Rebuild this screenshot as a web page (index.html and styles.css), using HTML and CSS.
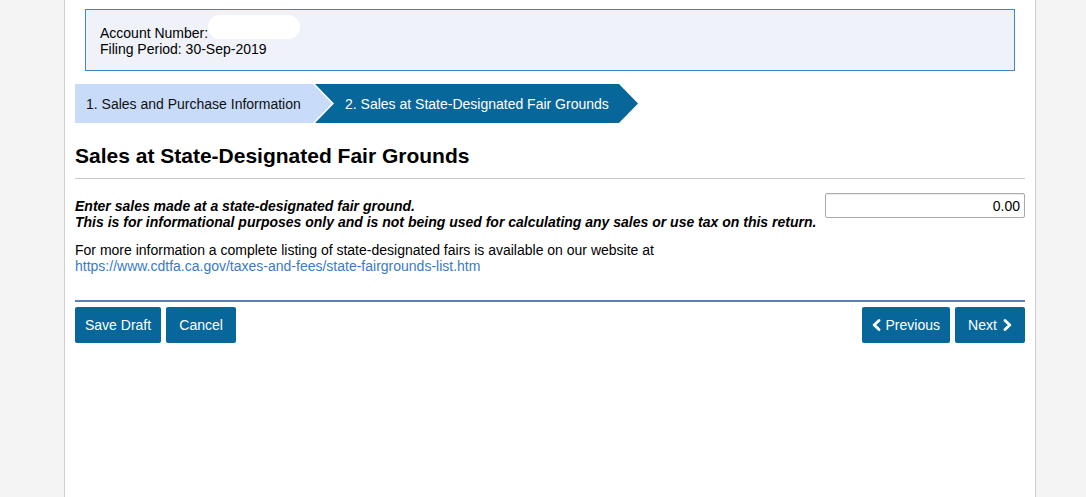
FILE: index.html
```html
<!DOCTYPE html>
<html>
<head>
<meta charset="utf-8">
<link rel="stylesheet" href="styles.css">
</head>
<body>
<div class="page">
  <div class="content">
    <div class="info">
      <div class="info-line">Account Number: <span class="redact"></span></div>
      <div class="info-line">Filing Period: 30-Sep-2019</div>
    </div>
    <div class="steps">
      <div class="step step1">1. Sales and Purchase Information</div>
      <div class="step step2">2. Sales at State-Designated Fair Grounds</div>
    </div>
    <h1 class="title">Sales at State-Designated Fair Grounds</h1>
    <div class="row">
      <div class="prompt">
        <div>Enter sales made at a state-designated fair ground.</div>
        <div>This is for informational purposes only and is not being used for calculating any sales or use tax on this return.</div>
      </div>
      <input class="amount" type="text" value="0.00">
    </div>
    <div class="more">
      <div>For more information a complete listing of state-designated fairs is available on our website at</div>
      <a class="link" href="#">https://www.cdtfa.ca.gov/taxes-and-fees/state-fairgrounds-list.htm</a>
    </div>
    <div class="actions">
      <div class="group">
        <button class="btn">Save Draft</button>
        <button class="btn">Cancel</button>
      </div>
      <div class="group">
        <button class="btn"><svg class="chev prev" viewBox="0 0 9 12" width="9" height="12"><path d="M7 1.5 L2.2 6 L7 10.5" fill="none" stroke="#fff" stroke-width="2.8" stroke-linecap="round" stroke-linejoin="round"/></svg>Previous</button>
        <button class="btn">Next<svg class="chev next" viewBox="0 0 9 12" width="9" height="12"><path d="M2 1.5 L6.8 6 L2 10.5" fill="none" stroke="#fff" stroke-width="2.8" stroke-linecap="round" stroke-linejoin="round"/></svg></button>
      </div>
    </div>
  </div>
</div>
</body>
</html>
```
FILE: styles.css
```css
html, body {
  margin: 0;
  padding: 0;
  background: #f4f4f4;
  font-family: "Liberation Sans", Arial, sans-serif;
  color: #000;
}
.page {
  width: 970px;
  margin-left: 64px;
  min-height: 497px;
  background: #fff;
  border-left: 1px solid #cfcfcf;
  border-right: 1px solid #cfcfcf;
}
.content {
  padding: 9px 10px 0 10px;
}
.info {
  margin: 0 10px;
  height: 62px;
  border: 1px solid #3d86c9;
  background: #eff3f9;
  padding: 15px 14px 0 14px;
  box-sizing: border-box;
  font-size: 14px;
  line-height: 16px;
}
.info-line {
  position: relative;
}
.redact {
  display: inline-block;
  position: absolute;
  left: 108px;
  top: -10px;
  width: 92px;
  height: 24px;
  border-radius: 12px;
  background: #fff;
}
.steps {
  display: flex;
  margin-top: 13px;
  height: 39px;
}
.step {
  display: flex;
  align-items: center;
  font-size: 14px;
  height: 39px;
  box-sizing: border-box;
}
.step1 {
  width: 257px;
  background: #c8dcfa;
  color: #111;
  padding-left: 11px;
  clip-path: polygon(0 0, calc(100% - 19px) 0, 100% 50%, calc(100% - 19px) 100%, 0 100%);
}
.step2 {
  width: 323px;
  margin-left: -17px;
  background: #08679a;
  color: #fff;
  padding-left: 30px;
  clip-path: polygon(0 0, calc(100% - 19px) 0, 100% 50%, calc(100% - 19px) 100%, 0 100%, 19px 50%);
}
.title {
  margin: 20px 0 0 0;
  font-size: 21px;
  line-height: 26px;
  font-weight: bold;
  padding-bottom: 9px;
  border-bottom: 1px solid #cccccc;
}
.row {
  display: flex;
  justify-content: space-between;
  align-items: flex-start;
  margin-top: 14px;
}
.prompt {
  font-size: 14px;
  font-weight: bold;
  font-style: italic;
  line-height: 16px;
  padding-top: 5px;
}
.amount {
  width: 200px;
  height: 25px;
  box-sizing: border-box;
  border: 1px solid #aaa;
  border-radius: 2px;
  text-align: right;
  font-family: "Liberation Sans", Arial, sans-serif;
  font-size: 14px;
  padding: 0 4px;
  color: #000;
  box-shadow: inset 0 1px 1px rgba(0,0,0,0.08);
}
.more {
  margin-top: 12px;
  font-size: 14px;
  line-height: 16px;
}
.link {
  color: #3b7ac6;
  text-decoration: none;
}
.actions {
  display: flex;
  justify-content: space-between;
  margin-top: 26px;
  border-top: 2px solid #5f7ec0;
  padding-top: 5px;
}
.group {
  display: flex;
  gap: 5px;
}
.btn {
  height: 36px;
  min-width: 70px;
  background: #08679a;
  color: #fff;
  border: none;
  border-radius: 2px;
  font-family: "Liberation Sans", Arial, sans-serif;
  font-size: 14px;
  padding: 0 10px;
  display: flex;
  align-items: center;
  justify-content: center;
}
.chev {
  display: block;
}
.chev.prev {
  margin-right: 5px;
}
.chev.next {
  margin-left: 6px;
}
```
